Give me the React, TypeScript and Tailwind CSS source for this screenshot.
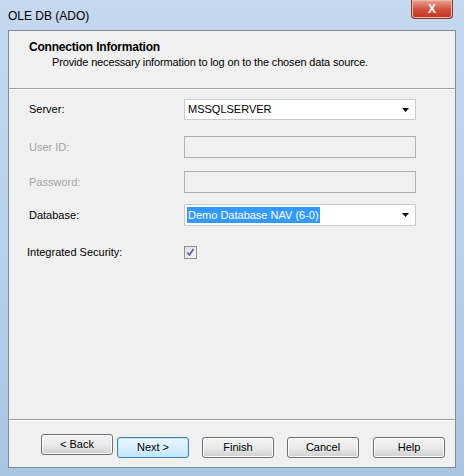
import React from 'react';

const font = { fontFamily: '"Liberation Sans", Arial, sans-serif' };

const WizardButton: React.FC<{ label: string; primary?: boolean }> = ({ label, primary }) => (
  <button
    className={`h-[21px] w-[72px] rounded-[3px] border text-[11px] text-black ${
      primary
        ? 'border-[#3c7fb1] bg-gradient-to-b from-[#eaf6fd] via-[#d9f0fc] to-[#bee6fd] shadow-[inset_0_0_0_1px_#c5e6f8]'
        : 'border-[#707070] bg-gradient-to-b from-[#f2f2f2] via-[#ebebeb] to-[#cfcfcf] shadow-[inset_0_0_0_1px_#fcfcfc]'
    }`}
  >
    {label}
  </button>
);

const Arrow = () => (
  <svg width="7" height="4" viewBox="0 0 7 4" className="mr-[6px]">
    <path d="M0 0h7L3.5 4z" fill="#000" />
  </svg>
);

export default function App() {
  return (
    <div
      className="flex h-[476px] w-[464px] flex-col bg-gradient-to-b from-[#c4d8ee] via-[#b9d1ea] to-[#a9c4e2] px-[8px] pb-[8px]"
      style={font}
    >
      {/* title bar */}
      <div className="relative flex h-[30px] items-start">
        <span className="mt-[7px] text-[12px] text-black">OLE DB (ADO)</span>
        <div className="absolute right-[3px] top-0 flex h-[19px] w-[42px] items-center justify-center rounded-b-[4px] border border-t-0 border-[#8a3c34] bg-gradient-to-b from-[#e8a493] via-[#d0533e] to-[#c3311d] shadow-[inset_0_0_0_1px_#f0b8a8]">
          <span className="text-[12px] font-bold leading-none text-white">X</span>
        </div>
      </div>

      {/* client area */}
      <div className="flex flex-1 flex-col border border-[#7c8da3] bg-[#f0f0f0]">
        {/* header */}
        <div className="h-[58px] border-b border-[#a0a0a0] pl-[20px] pt-[9px]">
          <div className="text-[12px] font-bold leading-[15px] tracking-[-0.2px] text-black">Connection Information</div>
          <div className="pl-[23px] text-[11px] leading-[15px] tracking-[-0.15px] text-black">
            Provide necessary information to log on to the chosen data source.
          </div>
        </div>

        {/* form */}
        <div className="flex flex-1 flex-col border-t border-white pl-[20px] text-[11px] text-black">
          <div className="mt-[9px] flex items-center">
            <span className="w-[155px]">Server:</span>
            <div className="flex h-[21px] w-[232px] items-center justify-between border border-[#c8cbd0] bg-white pl-[3px]">
              <span className="text-[11px]">MSSQLSERVER</span>
              <Arrow />
            </div>
          </div>
          <div className="mt-[16px] flex items-center">
            <span className="w-[155px] text-[#a3a3a3]">User ID:</span>
            <div className="h-[22px] w-[232px] border border-[#adb2b5] bg-[#f0f0f0]" />
          </div>
          <div className="mt-[13px] flex items-center">
            <span className="w-[155px] text-[#a3a3a3]">Password:</span>
            <div className="h-[22px] w-[232px] border border-[#adb2b5] bg-[#f0f0f0]" />
          </div>
          <div className="mt-[11px] flex items-center">
            <span className="w-[155px]">Database:</span>
            <div className="flex h-[22px] w-[232px] items-center justify-between border border-[#c8cbd0] bg-white pl-[2px]">
              <span className="bg-[#3399ff] px-[1px] leading-[16px] text-white">Demo Database NAV (6-0)</span>
              <Arrow />
            </div>
          </div>
          <div className="mt-[18px] flex items-center">
            <span className="-ml-[2px] mr-[1px] w-[156px]">Integrated Security:</span>
            <div className="flex h-[13px] w-[13px] items-center justify-center border border-[#8e8f8f] bg-gradient-to-br from-[#dcdcdc] to-[#fbfbfb]">
              <svg width="9" height="9" viewBox="0 0 9 9">
                <path d="M1.5 4.5l2 2.5 4-6" stroke="#4a5f97" strokeWidth="1.6" fill="none" />
              </svg>
            </div>
          </div>
        </div>

        {/* buttons */}
        <div className="h-[48px] border-t border-[#a0a0a0] shadow-[inset_0_1px_0_#ffffff]">
          <div className="mt-[14px] flex pl-[32px]">
            <WizardButton label="< Back" />
            <div className="ml-[4px]">
              <WizardButton label="Next >" primary />
            </div>
            <div className="ml-[13px]">
              <WizardButton label="Finish" />
            </div>
            <div className="ml-[13px]">
              <WizardButton label="Cancel" />
            </div>
            <div className="ml-[14px]">
              <WizardButton label="Help" />
            </div>
          </div>
        </div>
      </div>
    </div>
  );
}
